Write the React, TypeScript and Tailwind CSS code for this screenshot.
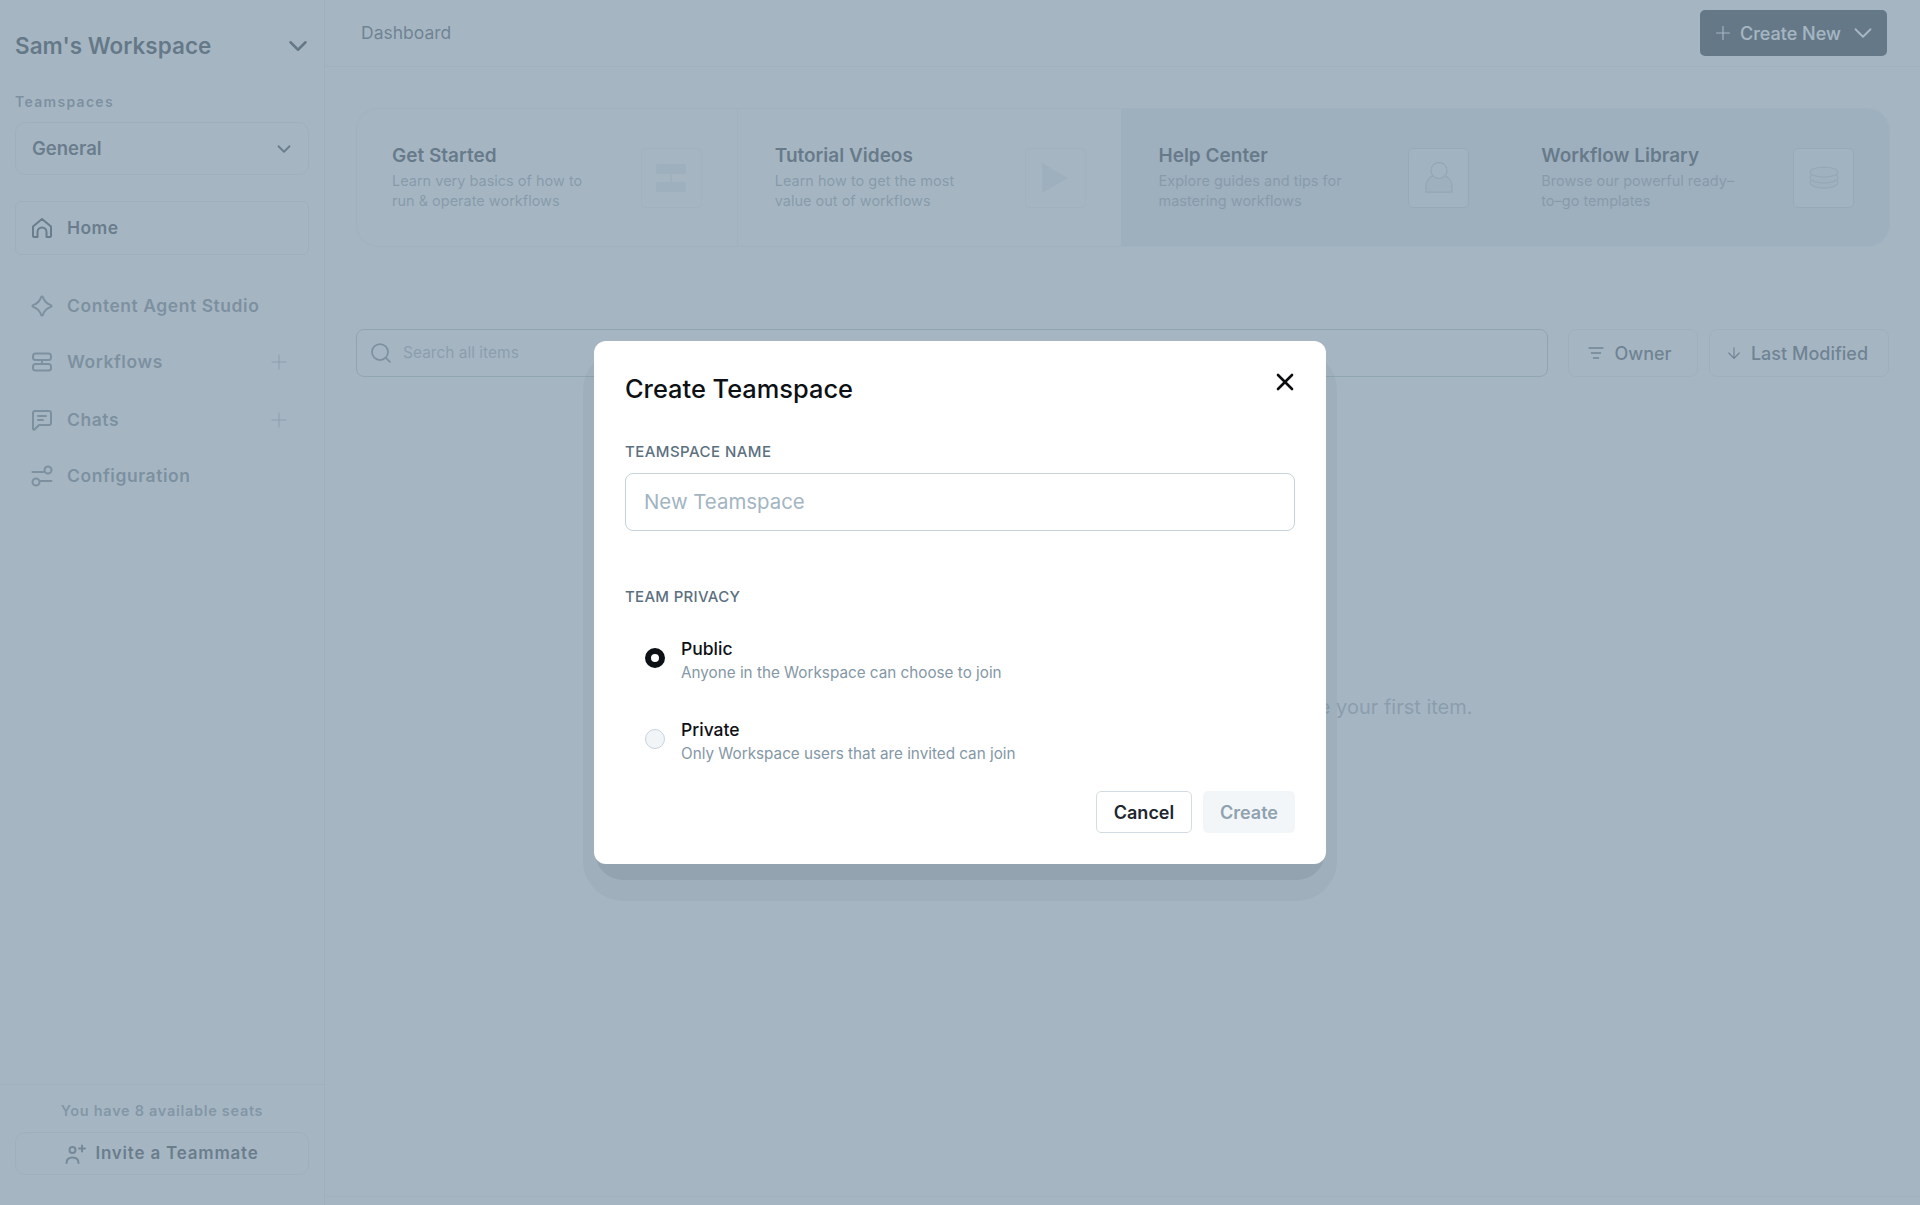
import React from "react";
import { ChevronDown, Plus, Search, ArrowDown, X } from "lucide-react";

const font = { fontFamily: "Inter, 'Liberation Sans', sans-serif" };

const HomeIcon = () => (
  <svg width="22" height="22" viewBox="0 0 22 22" fill="none" stroke="currentColor" strokeWidth="2" strokeLinejoin="round" strokeLinecap="round">
    <path d="M2 9.500 11 2l9 7.500V19a1 1 0 0 1-1 1h-3.500v-5a4.500 4.500 0 0 0-9 0v5H3a1 1 0 0 1-1-1z" />
  </svg>
);

const SparkIcon = () => (
  <svg width="22" height="22" viewBox="0 0 22 22" fill="none" stroke="currentColor" strokeWidth="2" strokeLinejoin="round">
    <path d="M11 1.500c.4 0 .7.2.9.6C13 5.500 16.500 9 19.900 10.100c.8.300.8 1.500 0 1.800C16.500 13 13 16.500 11.900 19.900c-.3.8-1.500.8-1.800 0C9 16.500 5.500 13 2.100 11.900c-.8-.3-.8-1.500 0-1.800C5.500 9 9 5.500 10.100 2.100c.2-.4.5-.6.9-.6z" />
  </svg>
);

const FlowIcon = () => (
  <svg width="22" height="22" viewBox="0 0 22 22" fill="none" stroke="currentColor" strokeWidth="2">
    <rect x="2" y="2.500" width="18" height="6.500" rx="2.500" />
    <rect x="2" y="13" width="18" height="6.500" rx="2.500" />
    <path d="M11 9v4" />
  </svg>
);

const ChatIcon = () => (
  <svg width="22" height="22" viewBox="0 0 22 22" fill="none" stroke="currentColor" strokeWidth="2" strokeLinejoin="round" strokeLinecap="round">
    <path d="M4 2h14a2 2 0 0 1 2 2v10a2 2 0 0 1-2 2H8l-4 4a1 1 0 0 1-2-.500V4a2 2 0 0 1 2-2z" />
    <path d="M7 7h8M7 11h5" />
  </svg>
);

const SlidersIcon = () => (
  <svg width="22" height="22" viewBox="0 0 22 22" fill="none" stroke="currentColor" strokeWidth="2" strokeLinecap="round">
    <path d="M1.500 7h11" />
    <circle cx="17" cy="5" r="3.500" />
    <path d="M9.500 16h11" />
    <circle cx="5" cy="17" r="3.500" />
  </svg>
);

const InviteIcon = () => (
  <svg width="22" height="22" viewBox="0 0 22 22" fill="none" stroke="currentColor" strokeWidth="2" strokeLinecap="round">
    <circle cx="7.500" cy="7" r="3" />
    <path d="M1.500 20c0-3.500 2.500-5.500 6-5.500s6 2 6 5.500" />
    <path d="M17 2.500v6M14 5.500h6" />
  </svg>
);

const navItems = [
  { label: "Content Agent Studio", icon: <SparkIcon />, plus: false, cls: "h-[56px]" },
  { label: "Workflows", icon: <FlowIcon />, plus: true, cls: "h-[56px]" },
  { label: "Chats", icon: <ChatIcon />, plus: true, cls: "h-[60px]" },
  { label: "Configuration", icon: <SlidersIcon />, plus: false, cls: "h-[52px]" },
];

const cards = [
  {
    title: "Get Started",
    lines: ["Learn very basics of how to", "run & operate workflows"],
    cls: "w-[381px] pl-[35px] border-r border-[#eceef2]",
    box: "border-[#eceef2]",
    icon: (
      <svg width="30" height="28" viewBox="0 0 30 28" fill="#e3e6ec">
        <rect x="0" y="0" width="30" height="10" rx="2" />
        <rect x="14.250" y="10" width="1.500" height="8" />
        <rect x="0" y="18" width="30" height="10" rx="2" />
      </svg>
    ),
  },
  {
    title: "Tutorial Videos",
    lines: ["Learn how to get the most", "value out of workflows"],
    cls: "w-[383px] pl-[37px]",
    box: "border-[#eceef2]",
    icon: (
      <svg width="28" height="30" viewBox="0 0 28 30" fill="#e3e6ec">
        <path d="M1 0v30l26-15z" />
      </svg>
    ),
  },
  {
    title: "Help Center",
    lines: ["Explore guides and tips for", "mastering workflows"],
    cls: "w-[384px] pl-[38px] bg-[#e4e8f0]",
    box: "bg-[#f1f3f7] border-[#c9ced8]",
    icon: (
      <svg width="28" height="31" viewBox="0 0 28 31" fill="none" stroke="#bcc3ce" strokeWidth="1.250">
        <path d="M1 30v-6c0-5.500 4-9.500 8-10.500h10c4 1 8 5 8 10.500v6z" fill="#e4e8f0" />
        <circle cx="14" cy="8.500" r="8" fill="#f1f3f7" />
      </svg>
    ),
  },
  {
    title: "Workflow Library",
    lines: ["Browse our powerful ready–", "to–go templates"],
    cls: "w-[385px] pl-[37px] bg-[#e4e8f0]",
    box: "bg-[#f1f3f7] border-[#c9ced8]",
    icon: (
      <svg width="30" height="23" viewBox="0 0 30 23" fill="none" stroke="#c3c9d3" strokeWidth="1.250">
        <ellipse cx="15" cy="16.500" rx="14" ry="5.500" fill="#e9ecf2" />
        <ellipse cx="15" cy="11.500" rx="14" ry="5.500" fill="#e9ecf2" />
        <ellipse cx="15" cy="6" rx="14" ry="5" fill="#e9ecf2" />
      </svg>
    ),
  },
];

export default function App() {
  return (
    <div className="relative h-[1205px] w-full overflow-hidden bg-white flex" style={font}>
      {/* Sidebar */}
      <aside className="w-[325px] shrink-0 border-r border-[#e8ebef] flex flex-col px-[15px]">
        <div className="flex items-center justify-between h-[30px] mt-[31px] pr-[1px]">
          <span className="text-[22.500px] font-semibold text-[#111827]">Sam's Workspace</span>
          <ChevronDown size={30} strokeWidth={2} className="text-[#111827] mr-[-5px]" />
        </div>
        <div className="mt-[32px] text-[14px] leading-[18px] font-semibold tracking-[1.300px] text-[#6b7280]">Teamspaces</div>
        <div className="mt-[11px] h-[53px] w-[294px] rounded-[10px] border border-[#e5e8ed] flex items-center justify-between pl-[16px] pr-[13px]">
          <span className="text-[18.500px] font-semibold text-[#1f2937]">General</span>
          <ChevronDown size={22} strokeWidth={2} className="text-[#1f2937]" />
        </div>
        <div className="mt-[26px] h-[54px] w-[294px] rounded-[6px] border border-[#e5e8ed] flex items-center pl-[15px] gap-[14px] text-[#1f2937]">
          <HomeIcon />
          <span className="text-[17.500px] font-semibold tracking-[0.4px]">Home</span>
        </div>
        <nav className="mt-[23px] flex flex-col">
          {navItems.map((item) => (
            <div key={item.label} className={`${item.cls} flex items-center pl-[16px] pr-[18px] gap-[14px] text-[#6b7280]`}>
              {item.icon}
              <span className="flex-1 text-[17.500px] font-semibold tracking-[0.55px]">{item.label}</span>
              {item.plus && <Plus size={24} strokeWidth={1} className="text-[#9ca3af]" />}
            </div>
          ))}
        </nav>
        <div className="mt-auto -mx-[15px] border-t border-[#e8ebef] px-[15px] pb-[30px] pt-[16px]">
          <div className="text-center text-[14.500px] leading-[20px] font-semibold tracking-[0.7px] text-[#7e8797]">You have 8 available seats</div>
          <div className="mt-[11px] h-[43px] w-[294px] rounded-[10px] border border-[#e5e8ed] flex items-center justify-center gap-[8px] text-[#1f2937]">
            <span className="text-[#4b5563]"><InviteIcon /></span>
            <span className="text-[17px] font-semibold tracking-[0.8px]">Invite a Teammate</span>
          </div>
        </div>
      </aside>

      {/* Main */}
      <main className="flex-1 flex flex-col min-w-0">
        <header className="h-[67px] shrink-0 border-b border-[#e8ebef] flex items-center justify-between pl-[36px] pr-[33px]">
          <span className="pt-[1px] text-[17.500px] text-[#374151]">Dashboard</span>
          <button className="h-[46px] w-[187px] rounded-[5px] bg-[#111827] text-white flex items-center pl-[12px] gap-[6px]">
            <Plus size={22} strokeWidth={1.25} />
            <span className="pt-[1px] text-[18px] font-medium">Create New</span>
            <ChevronDown size={30} strokeWidth={1.5} className="ml-[1px]" />
          </button>
        </header>

        <div className="flex-1 flex flex-col pl-[31px] pr-[30px]">
          <div className="mt-[41px] h-[139px] w-[1534px] rounded-[22px] border border-[#eceef2] flex overflow-hidden">
            {cards.map((c) => (
              <div key={c.title} className={`${c.cls} flex items-center justify-between pr-[35px]`}>
                <div>
                  <div className="mb-[3px] text-[19px] leading-[24px] font-semibold text-[#18202e]">{c.title}</div>
                  {c.lines.map((l) => (
                    <div key={l} className="text-[14.500px] leading-[20.500px] text-[#8f97a5]">{l}</div>
                  ))}
                </div>
                <div className={`w-[61px] h-[60px] rounded-[5px] border flex items-center justify-center ${c.box}`}>
                  {c.icon}
                </div>
              </div>
            ))}
          </div>

          <div className="mt-[82px] flex gap-[11px]">
            <div className="w-[1192px] h-[48px] rounded-[8px] border border-[#b4bac4] flex items-center pl-[12px] gap-[10px] mr-[9px]">
              <Search size={24} strokeWidth={1.75} className="text-[#6b7280]" />
              <span className="text-[15.500px] text-[#9ca3af]">Search all items</span>
            </div>
            <div className="w-[130px] h-[48px] rounded-[8px] border border-[#e5e8ed] flex items-center justify-center gap-[10px] pr-[6px] text-[#374151]">
              <svg width="16" height="14" viewBox="0 0 16 14" fill="none" stroke="currentColor" strokeWidth="1.500" strokeLinecap="round">
                <path d="M1 2h14M3.500 7h9M5.500 12h5" />
              </svg>
              <span className="text-[18px] font-medium">Owner</span>
            </div>
            <div className="w-[180px] h-[48px] rounded-[8px] border border-[#e5e8ed] flex items-center justify-center gap-[8px] pr-[5px] text-[#374151]">
              <ArrowDown size={18} strokeWidth={1.5} />
              <span className="text-[18px] font-medium">Last Modified</span>
            </div>
          </div>

          <div className="mt-[316px] pr-[26px] text-center text-[20px] leading-[28px] text-[#9ca3af]">
            Get started by clicking the Create New button above to create your first item.
          </div>
        </div>

        <div className="h-[9px] shrink-0 border-t border-[#eceef2]" />
      </main>

      {/* Dialog */}
      <div className="absolute inset-0 bg-[rgba(132,156,172,0.735)] flex items-center justify-center">
        <div className="relative w-[732px] h-[523px]">
          <div className="absolute left-[-11px] right-[-11px] top-[9px] bottom-[-37px] rounded-[40px] bg-[rgba(90,110,130,0.08)]" />
          <div className="absolute left-[1px] right-[1px] top-[20px] bottom-[-16px] rounded-[28px] bg-[rgba(0,20,30,0.075)]" />
          <div className="relative h-full bg-white rounded-[12px] px-[31px] pt-[32px]">
            <button className="absolute top-[27px] right-[27px] text-[#0b0d10]">
              <X size={28} strokeWidth={2.25} />
            </button>
            <h2 className="text-[25.400px] leading-[32px] font-medium text-[#0d1014]">Create Teamspace</h2>

            <div className="mt-[37px] text-[15px] leading-[20px] font-medium tracking-[0.45px] text-[#5c7080]">TEAMSPACE NAME</div>
            <div className="mt-[11px] h-[58px] rounded-[8px] border border-[#c7d3dc] flex items-center pl-[18px]">
              <span className="text-[20.400px] text-[#a3b5c2]">New Teamspace</span>
            </div>

            <div className="mt-[56px] text-[15px] leading-[20px] font-medium tracking-[0.3px] text-[#5c7080]">TEAM PRIVACY</div>

            <div className="mt-[31px] flex pl-[20px] gap-[16px]">
              <div className="mt-[10px] w-[20px] h-[20px] rounded-full border-[6px] border-[#0d1014] bg-white" />
              <div>
                <div className="text-[17.500px] leading-[22px] font-medium text-[#0d1014]">Public</div>
                <div className="mt-[3px] text-[15.250px] leading-[20px] text-[#8497a6]">Anyone in the Workspace can choose to join</div>
              </div>
            </div>
            <div className="mt-[36px] flex pl-[20px] gap-[16px]">
              <div className="mt-[10px] w-[20px] h-[20px] rounded-full border border-[#c7d3dc] bg-[#f1f5f8]" />
              <div>
                <div className="text-[17.500px] leading-[22px] font-medium text-[#0d1014]">Private</div>
                <div className="mt-[3px] text-[15.250px] leading-[20px] text-[#8497a6]">Only Workspace users that are invited can join</div>
              </div>
            </div>

            <div className="mt-[27px] flex justify-end gap-[11px]">
              <button className="w-[96px] h-[42px] rounded-[5px] border-[1.5px] border-[#d3dce3] text-[18px] font-semibold text-[#20272e]">Cancel</button>
              <button className="w-[92px] h-[42px] rounded-[5px] bg-[#f3f6f8] text-[18px] font-semibold text-[#8fa2b0]">Create</button>
            </div>
          </div>
        </div>
      </div>
    </div>
  );
}
